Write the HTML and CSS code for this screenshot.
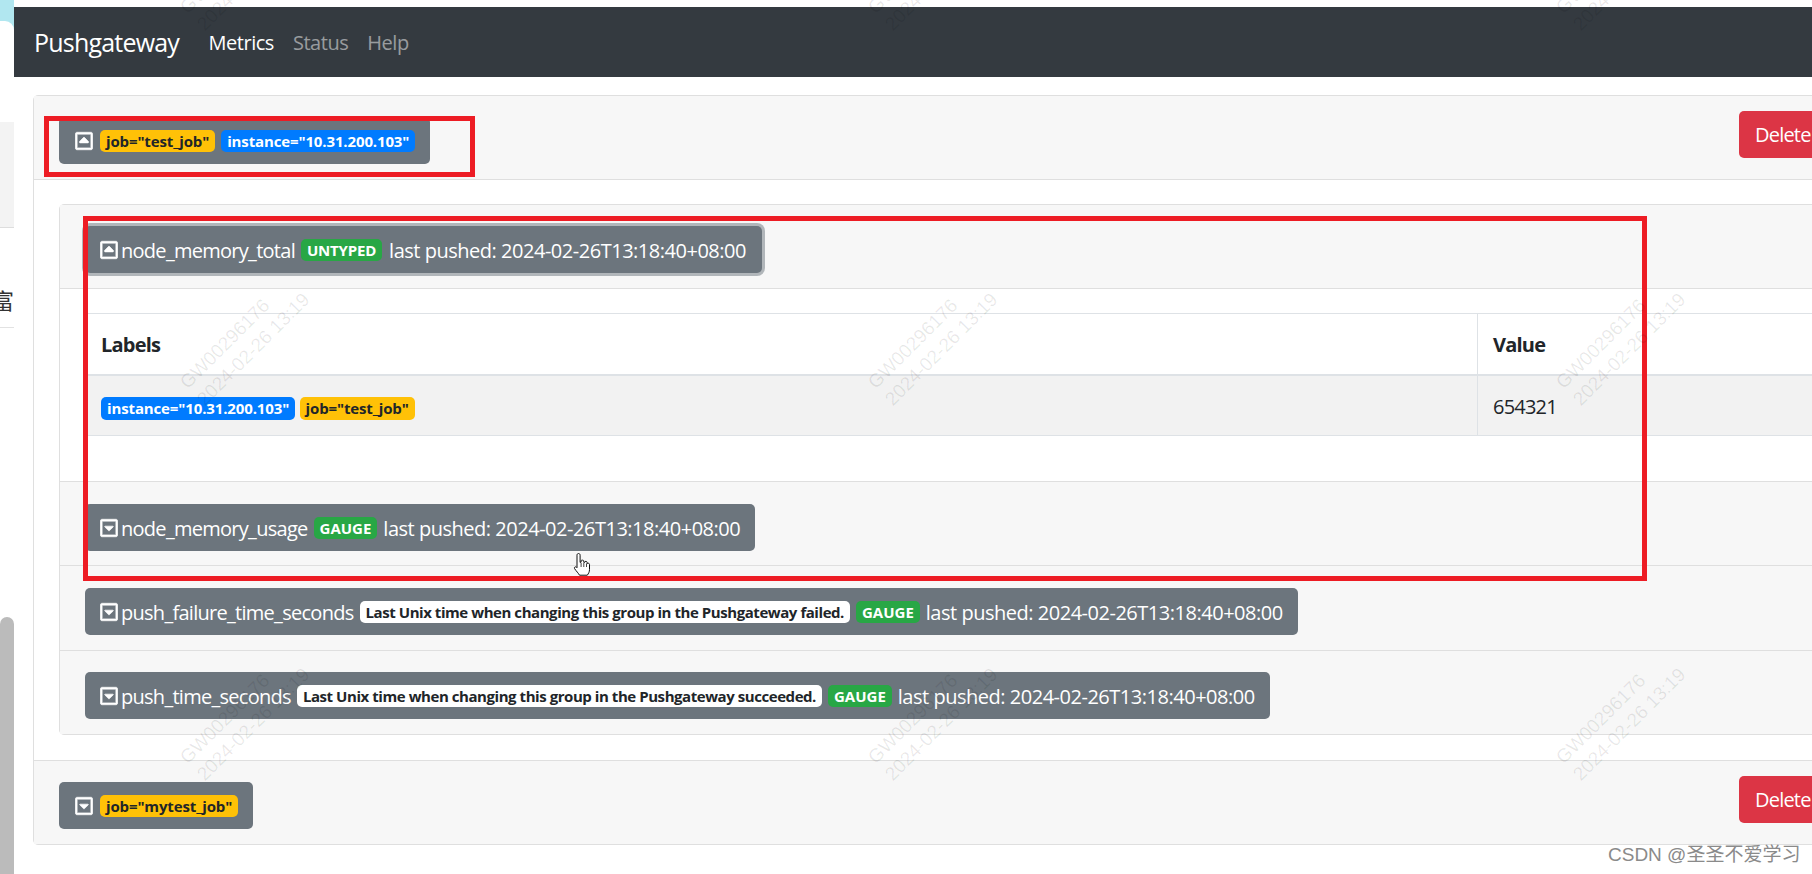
FILE: index.html
```html
<!DOCTYPE html>
<html lang="en">
<head>
  <meta charset="UTF-8" />
  <title>Pushgateway</title>
  <link rel="stylesheet" href="styles.css">
</head>
<body>

<svg class="defs" width="0" height="0">
  <symbol id="caret-up" viewBox="0 0 448 512">
    <path d="M322.9 304H125.1c-19.1 0-28.7-23.1-15.3-36.7l98.9-98.9c8.4-8.4 21.9-8.4 30.3 0l98.9 98.9c13.5 13.6 3.9 36.7-15.3 36.7zM448 80v352c0 26.5-21.5 48-48 48H48c-26.5 0-48-21.5-48-48V80c0-26.5 21.5-48 48-48h352c26.5 0 48 21.5 48 48zm-48 346V86c0-3.3-2.7-6-6-6H54c-3.3 0-6 2.7-6 6v340c0 3.3 2.7 6 6 6h340c3.3 0 6-2.7 6-6z"/>
  </symbol>
  <symbol id="caret-down" viewBox="0 0 448 512">
    <path d="M125.1 208h197.8c10.7 0 16.1 13 8.5 20.5l-98.9 98.3c-4.7 4.7-12.2 4.7-16.9 0l-98.9-98.3c-7.7-7.5-2.3-20.5 8.4-20.5zM448 80v352c0 26.5-21.5 48-48 48H48c-26.5 0-48-21.5-48-48V80c0-26.5 21.5-48 48-48h352c26.5 0 48 21.5 48 48zm-48 346V86c0-3.3-2.7-6-6-6H54c-3.3 0-6 2.7-6 6v340c0 3.3 2.7 6 6 6h340c3.3 0 6-2.7 6-6z"/>
  </symbol>
</svg>

<div class="shot">

  <div class="under">
    <div class="under-top"><div class="under-white"></div></div>
    <div class="under-gray"></div>
    <div class="under-char">富</div>
    <div class="under-spacer"></div>
    <div class="under-scroll"></div>
  </div>

  <div class="app">
    <nav class="navbar">
      <a class="brand">Pushgateway</a>
      <a class="nav-link active">Metrics</a>
      <a class="nav-link">Status</a>
      <a class="nav-link">Help</a>
    </nav>

    <div class="card outer">
      <div class="card-header group-header">
        <button class="toggle group-toggle">
          <svg class="icon"><use href="#caret-up"/></svg>
          <span class="badge warn">job="test_job"</span>
          <span class="badge primary">instance="10.31.200.103"</span>
        </button>
        <button class="delete">Delete</button>
      </div>

      <div class="card-body">
        <div class="card inner">
          <div class="card-header first">
            <button class="toggle focus">
              <svg class="icon"><use href="#caret-up"/></svg>
              <span class="name">node_memory_total</span>
              <span class="badge success">UNTYPED</span>
              <span class="pushed">last pushed: 2024-02-26T13:18:40+08:00</span>
            </button>
          </div>
          <div class="card-body metric-body">
            <table class="values">
              <colgroup><col class="col-labels"><col></colgroup>
              <thead>
                <tr><th>Labels</th><th>Value</th></tr>
              </thead>
              <tbody>
                <tr>
                  <td>
                    <span class="badge primary">instance="10.31.200.103"</span>
                    <span class="badge warn">job="test_job"</span>
                  </td>
                  <td>654321</td>
                </tr>
              </tbody>
            </table>
          </div>
          <div class="card-header usage">
            <button class="toggle">
              <svg class="icon"><use href="#caret-down"/></svg>
              <span class="name">node_memory_usage</span>
              <span class="badge success gauge">GAUGE</span>
              <span class="pushed">last pushed: 2024-02-26T13:18:40+08:00</span>
            </button>
          </div>
          <div class="card-header">
            <button class="toggle">
              <svg class="icon"><use href="#caret-down"/></svg>
              <span class="name">push_failure_time_seconds</span>
              <span class="badge light">Last Unix time when changing this group in the Pushgateway failed.</span>
              <span class="badge success gauge">GAUGE</span>
              <span class="pushed">last pushed: 2024-02-26T13:18:40+08:00</span>
            </button>
          </div>
          <div class="card-header last">
            <button class="toggle">
              <svg class="icon"><use href="#caret-down"/></svg>
              <span class="name">push_time_seconds</span>
              <span class="badge light">Last Unix time when changing this group in the Pushgateway succeeded.</span>
              <span class="badge success gauge">GAUGE</span>
              <span class="pushed">last pushed: 2024-02-26T13:18:40+08:00</span>
            </button>
          </div>
        </div>
      </div>

      <div class="card-header group-header last">
        <button class="toggle group-toggle">
          <svg class="icon"><use href="#caret-down"/></svg>
          <span class="badge warn">job="mytest_job"</span>
        </button>
        <button class="delete">Delete</button>
      </div>
    </div>
  </div>
</div>

<!-- annotations drawn over the screenshot -->
<div class="mark mark-job"></div>
<div class="mark mark-metrics"></div>

<div class="watermarks">
  <div class="wm">GW00296176<br>2024-02-26 13:19</div>
  <div class="wm">GW00296176<br>2024-02-26 13:19</div>
  <div class="wm">GW00296176<br>2024-02-26 13:19</div>
  <div class="wm">GW00296176<br>2024-02-26 13:19</div>
  <div class="wm">GW00296176<br>2024-02-26 13:19</div>
  <div class="wm">GW00296176<br>2024-02-26 13:19</div>
  <div class="wm">GW00296176<br>2024-02-26 13:19</div>
  <div class="wm">GW00296176<br>2024-02-26 13:19</div>
  <div class="wm">GW00296176<br>2024-02-26 13:19</div>
</div>

<svg class="pointer" viewBox="0 0 18 25">
  <path d="M5.5 1.5c1 0 1.6.7 1.6 1.7v7.2l1-.2V8.8c0-.9 2.6-.9 2.7.2v1.400l.8.1V10c.2-.9 2.500-.8 2.600.4v1.300c.3-.8 2.300-.6 2.300.7v5.100c0 2.500-1 4-2.200 5.700H6.500c-1-2-3.200-3.900-5-6.700-.6-1.100.9-2.300 2-1.300l.5.5V3.200c0-1 .6-1.700 1.500-1.700z" fill="#fff" stroke="#111" stroke-width="1"/>
  <path d="M8.100 11v4M10.800 11v4M13.500 11.500v3.500" stroke="#111" stroke-width=".8" fill="none"/>
</svg>

<div class="csdn">CSDN @圣圣不爱学习</div>

</body>
</html>
```

FILE: styles.css
```css
html, body { margin: 0; padding: 0; background: #fff; }
body { width: 1812px; height: 874px; overflow: hidden; position: relative; font-family: "Open Sans", "Noto Sans", sans-serif; font-size: 20px; color: #212529; }
.defs { position: absolute; }

.shot { display: grid; grid-template-columns: 14px 1fr; height: 874px; }

/* bits of the window behind, on the left edge */
.under { display: flex; flex-direction: column; overflow: hidden; height: 874px; }
.under-top { background: #b1e7f0; height: 30px; }
.under-white { background: #fff; height: 9px; margin-top: 21px; border-top-right-radius: 10px; }
.under-gray { background: #f3f3f3; height: 105px; margin-top: 92px; border-bottom: 1px solid #ddd; }
.under-char { height: 40px; margin-top: 59px; display: flex; justify-content: flex-end; font: 22px/25px "Noto Sans CJK SC", sans-serif; color: #333; border-bottom: 1px solid #e2e2e2; white-space: nowrap; }
.under-spacer { flex: 1; }
.under-scroll { background: #bbb; height: 257px; border-radius: 7px 7px 0 0; }

.app { padding-top: 7px; overflow: hidden; }

.navbar { background: #343a40; height: 70px; display: flex; align-items: center; padding: 0 11px 0 20px; box-sizing: border-box; }
.brand { color: #fff; font-size: 25px; margin-right: 20px; letter-spacing: -.8px; }
.nav-link { color: rgba(255,255,255,.5); padding: 0 9.500px; font-size: 20px; letter-spacing: -.47px; }
.nav-link.active { color: #fff; }

.card { border: 1px solid #dfdfdf; border-radius: 5px; background: #fff; box-sizing: border-box; }
.outer { width: 1900px; margin: 18px 0 0 19px; }
.inner { margin: 0; }

.card-header { background: #f7f7f7; border-bottom: 1px solid #dfdfdf; padding: 22px 25px 15px; display: flex; }
.card-header.first { padding-top: 21px; }
.card-header.usage { padding-bottom: 14px; }
.card-header.last { border-bottom: 0; padding-top: 21px; }
.outer > .last { border-top: 1px solid #dfdfdf; }
.group-header { padding: 21px 103px 15px 25px; justify-content: space-between; align-items: flex-start; }
.card-body { padding: 24px 25px 25px; }
.metric-body { border-bottom: 1px solid #dfdfdf; }

.toggle { display: inline-flex; align-items: center; height: 47px; padding: 0 15px; box-sizing: border-box; border: 0; border-radius: 5px; background: #6c757d; color: #fff; font: inherit; white-space: nowrap; }
.toggle.focus { box-shadow: 0 0 0 3px rgba(108,117,125,.5); padding-right: 16px; }
.toggle.focus .pushed { margin-left: 7px; }
.icon { width: 18px; height: 20px; fill: #fff; stroke: #fff; stroke-width: 16; flex: none; margin-right: 3px; }
.group-toggle { padding-left: 16px; }
.group-toggle .icon { margin-right: 7px; }
.name { letter-spacing: -.72px; padding-top: 2px; }
.pushed { margin-left: 6px; letter-spacing: -.48px; padding-top: 2px; }

.badge { display: inline-block; height: 22px; line-height: 22px; padding: 0 6px; border-radius: 5px; font-size: 15px; font-weight: 700; letter-spacing: -.13px; white-space: nowrap; }
.warn { background: #ffc107; color: #212529; }
.primary { background: #007bff; color: #fff; }
.success { background: #28a745; color: #fff; letter-spacing: -.2px; }
.gauge { letter-spacing: 0; }
.light { background: #fff; color: #212529; letter-spacing: -.44px; }
.toggle .badge { margin-left: 6px; }
.group-toggle .icon + .badge { margin-left: 0; }

.delete { width: 90px; height: 47px; margin-top: -6px; border: 0; border-radius: 5px; background: #dc3545; color: #fff; font: inherit; text-align: left; padding: 0 0 0 16px; letter-spacing: -.8px; flex: none; }

.values { border-collapse: collapse; table-layout: fixed; width: 1796px; margin-bottom: 20px; }
.col-labels { width: 1392px; }
.values th, .values td { border: 1px solid #dee2e6; padding: 16px 15px 14px; text-align: left; height: 61px; box-sizing: border-box; letter-spacing: -.8px; }
.values thead th { border-bottom-width: 2px; font-weight: 700; }
.values tbody tr { background: #f2f2f2; }
.values .badge { height: 23px; line-height: 23px; letter-spacing: -.13px; }

.mark { position: absolute; border: 5px solid #ed1c24; box-sizing: border-box; }
.mark-job { left: 44px; top: 116px; width: 431px; height: 61px; }
.mark-metrics { left: 83px; top: 216px; width: 1564px; height: 365px; }

.watermarks { position: absolute; left: -99px; top: -222px; display: grid; grid-template-columns: repeat(3, 688px); grid-template-rows: repeat(3, 375px); pointer-events: none; }
.wm { align-self: center; justify-self: center; text-align: left; transform: rotate(-45deg); font: 19px/24px "Liberation Sans", sans-serif; color: rgba(0,0,0,.09); white-space: nowrap; }

.pointer { position: absolute; left: 573px; top: 552px; width: 18px; height: 25px; }

.csdn { position: absolute; left: 1608px; top: 844px; font: 19px/22px "Liberation Sans", "Noto Sans CJK SC", sans-serif; color: #8a8a8a; white-space: nowrap; }
```
